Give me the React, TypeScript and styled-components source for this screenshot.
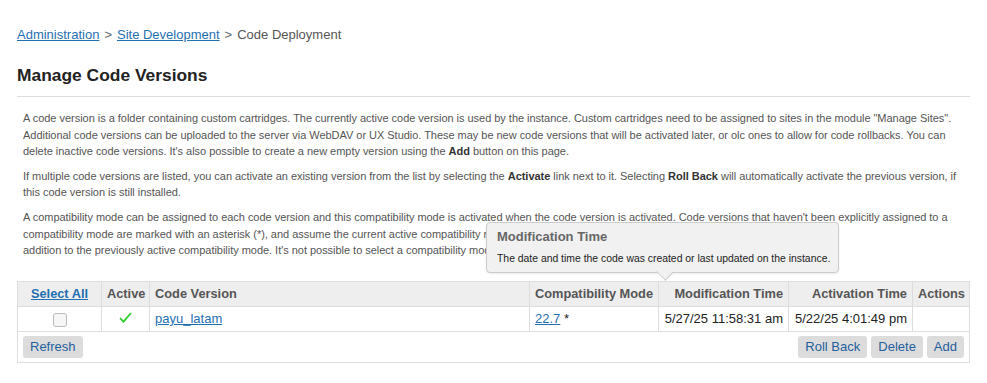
import React from "react";
import styled, { createGlobalStyle } from "styled-components";

const GlobalStyle = createGlobalStyle`
  body {
    margin: 0;
    background: #fff;
    font-family: "Liberation Sans", Arial, Helvetica, sans-serif;
    color: #222;
  }
`;

const rows = [
  {
    name: "payu_latam",
    active: true,
    mode: "22.7",
    modified: "5/27/25 11:58:31 am",
    activated: "5/22/25 4:01:49 pm",
  },
];

function CheckMark() {
  return (
    <svg width="13" height="11" viewBox="0 0 13 11">
      <path d="M1 6.2 L4.6 9.6 L12 1" fill="none" stroke="#2fcf2f" strokeWidth="1.8" />
    </svg>
  );
}

function App() {
  return (
    <Page>
      <GlobalStyle />
      <Breadcrumb>
        <Crumb href="#">Administration</Crumb>
        <Sep>&gt;</Sep>
        <Crumb href="#">Site Development</Crumb>
        <Sep>&gt;</Sep>
        <Current>Code Deployment</Current>
      </Breadcrumb>
      <Title>Manage Code Versions</Title>
      <Divider />
      <Description>
        <Para>
          <Line>
            A code version is a folder containing custom cartridges. The currently active code version is used by the
            instance. Custom cartridges need to be assigned to sites in the module "Manage Sites".
          </Line>
          <Line>
            Additional code versions can be uploaded to the server via WebDAV or UX Studio. These may be new code
            versions that will be activated later, or olc ones to allow for code rollbacks. You can
          </Line>
          <Line>
            delete inactive code versions. It's also possible to create a new empty version using the <b>Add</b> button
            on this page.
          </Line>
        </Para>
        <Para>
          <Line>
            If multiple code versions are listed, you can activate an existing version from the list by selecting the{" "}
            <b>Activate</b> link next to it. Selecting <b>Roll Back</b> will automatically activate the previous version,
            if
          </Line>
          <Line>this code version is still installed.</Line>
        </Para>
        <Para>
          <Line>
            A compatibility mode can be assigned to each code version and this compatibility mode is activated when the
            code version is activated. Code versions that haven't been explicitly assigned to a
          </Line>
          <Line>
            compatibility mode are marked with an asterisk (*), and assume the current active compatibility mode when
            they are activated. It is possible to change the active mode in
          </Line>
          <Line>
            addition to the previously active compatibility mode. It's not possible to select a compatibility mode that
            is lower than the current one.
          </Line>
        </Para>
      </Description>

      <TableWrap>
        <Tooltip>
          <TipTitle>Modification Time</TipTitle>
          <TipText>The date and time the code was created or last updated on the instance.</TipText>
        </Tooltip>
        <Table>
          <colgroup>
            <col style={{ width: 84 }} />
            <col style={{ width: 48 }} />
            <col />
            <col style={{ width: 129 }} />
            <col style={{ width: 130 }} />
            <col style={{ width: 124 }} />
            <col style={{ width: 57 }} />
          </colgroup>
          <thead>
            <tr>
              <Th $align="center">
                <HeadLink href="#">Select All</HeadLink>
              </Th>
              <Th $align="center">Active</Th>
              <Th>Code Version</Th>
              <Th>Compatibility Mode</Th>
              <Th $align="right">Modification Time</Th>
              <Th $align="right">Activation Time</Th>
              <Th>Actions</Th>
            </tr>
          </thead>
          <tbody>
            {rows.map((r) => (
              <tr key={r.name}>
                <Td $align="center">
                  <Checkbox />
                </Td>
                <Td $align="center">{r.active && <CheckMark />}</Td>
                <Td>
                  <Link href="#">{r.name}</Link>
                </Td>
                <Td>
                  <Link href="#">{r.mode}</Link> *
                </Td>
                <Td $align="right">{r.modified}</Td>
                <Td $align="right">{r.activated}</Td>
                <Td />
              </tr>
            ))}
            <tr>
              <ButtonCell colSpan={7}>
                <ButtonBar>
                  <Button>Refresh</Button>
                  <Spacer />
                  <Button>Roll Back</Button>
                  <Button>Delete</Button>
                  <Button>Add</Button>
                </ButtonBar>
              </ButtonCell>
            </tr>
          </tbody>
        </Table>
      </TableWrap>
    </Page>
  );
}
export default App;

const Page = styled.div`
  padding: 27px 17px 20px;
`;

const Breadcrumb = styled.div`
  display: flex;
  align-items: center;
  font-size: 13px;
  line-height: 16px;
`;

const Crumb = styled.a`
  color: #1f6fb2;
  text-decoration: underline;
`;

const Sep = styled.span`
  color: #666;
  margin: 0 5px;
`;

const Current = styled.span`
  color: #555;
`;

const Title = styled.h1`
  font-size: 17.4px;
  line-height: 20px;
  font-weight: bold;
  color: #222;
  margin: 22px 0 0;
`;

const Divider = styled.div`
  height: 1px;
  background: #ddd;
  margin-top: 11px;
`;

const Description = styled.div`
  padding: 13px 6px 0;
`;

const Para = styled.p`
  font-size: 11px;
  line-height: 16.6px;
  color: #555;
  margin: 0 0 8px;
  letter-spacing: -0.03px;

  b {
    color: #333;
  }
`;

const Line = styled.span`
  display: block;
  white-space: nowrap;
`;

const TableWrap = styled.div`
  position: relative;
  margin-top: 22px;
`;

const Table = styled.table`
  width: 100%;
  border-collapse: collapse;
  table-layout: fixed;
  border: 1px solid #ddd;
`;

const Th = styled.th<{ $align?: string }>`
  height: 24px;
  padding: 0 5px;
  background: #eee;
  border: 1px solid #ddd;
  font-size: 12.8px;
  font-weight: bold;
  color: #555;
  text-align: ${(p) => p.$align || "left"};
  white-space: nowrap;
`;

const HeadLink = styled.a`
  color: #1f6fb2;
  text-decoration: underline;
`;

const Td = styled.td<{ $align?: string }>`
  height: 24px;
  padding: 0 5px;
  border: 1px solid #ddd;
  font-size: 13px;
  color: #222;
  text-align: ${(p) => p.$align || "left"};
  white-space: nowrap;
`;

const Link = styled.a`
  color: #1f6fb2;
  text-decoration: underline;
`;

const Checkbox = styled.span`
  display: inline-block;
  width: 12px;
  height: 12px;
  border: 1px solid #bbb;
  border-radius: 3px;
  background: #f6f6f6;
  vertical-align: middle;
`;

const ButtonCell = styled.td`
  height: 30px;
  padding: 0 5px 0 5px;
  border: 1px solid #ddd;
`;

const ButtonBar = styled.div`
  display: flex;
  align-items: center;
  gap: 4px;
`;

const Spacer = styled.div`
  flex: 1;
`;

const Button = styled.button`
  height: 22px;
  padding: 0 7px;
  border: none;
  border-radius: 3px;
  background: #dcdcdc;
  color: #1f5f9c;
  font-family: "Liberation Sans", Arial, sans-serif;
  font-size: 13px;
`;

const Tooltip = styled.div`
  position: absolute;
  left: 469px;
  top: -59px;
  width: 353px;
  height: 51px;
  box-sizing: border-box;
  padding: 6px 10px;
  background: #f1f1f1;
  border: 1px solid #ccc;
  border-radius: 4px;
  box-shadow: 0 1px 2px rgba(0, 0, 0, 0.08);
  z-index: 5;

  &::after {
    content: "";
    position: absolute;
    left: 171px;
    bottom: -7px;
    width: 12px;
    height: 12px;
    background: #f1f1f1;
    border-right: 1px solid #ccc;
    border-bottom: 1px solid #ccc;
    transform: rotate(45deg) scaleY(0.8);
  }
`;

const TipTitle = styled.div`
  font-size: 13px;
  font-weight: bold;
  color: #666;
  line-height: 16px;
`;

const TipText = styled.div`
  font-size: 10.4px;
  color: #222;
  margin-top: 7px;
  line-height: 13px;
  white-space: nowrap;
`;
